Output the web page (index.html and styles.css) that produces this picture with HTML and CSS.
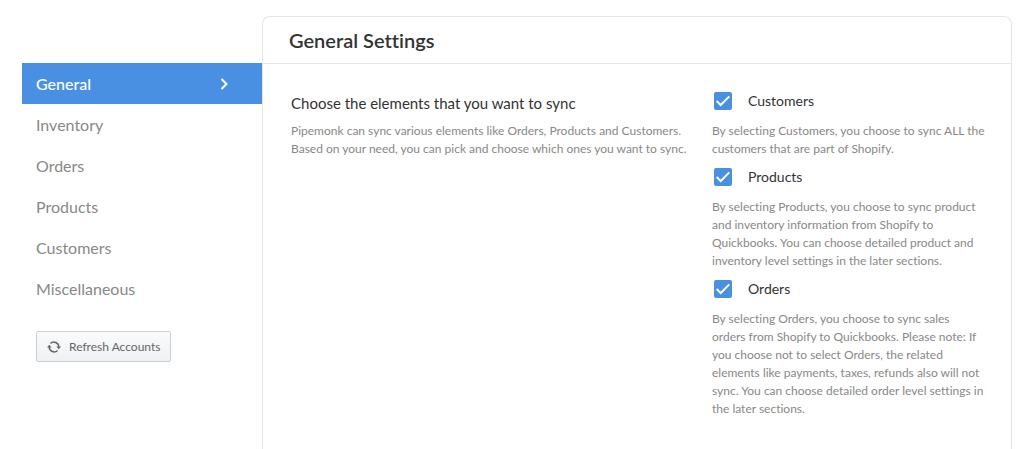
FILE: index.html
```html
<!DOCTYPE html>
<html lang="en">
<head>
  <meta charset="UTF-8">
  <meta name="viewport" content="width=device-width, initial-scale=1.0">
  <title>General Settings</title>
  <link rel="stylesheet" href="styles.css">
</head>
<body>
  <div class="page">
    <aside class="sidebar">
      <nav class="menu">
        <a class="menu-item active" href="#general">General
          <svg class="menu-arrow" width="8" height="12" viewBox="0 0 8 12" fill="none" stroke="currentColor" stroke-width="2"><path d="M1.5 1l5 5-5 5"/></svg>
        </a>
        <a class="menu-item" href="#inventory">Inventory</a>
        <a class="menu-item" href="#orders">Orders</a>
        <a class="menu-item" href="#products">Products</a>
        <a class="menu-item" href="#customers">Customers</a>
        <a class="menu-item" href="#miscellaneous">Miscellaneous</a>
      </nav>
      <button class="refresh" type="button">
        <svg width="14" height="12" viewBox="0 0 14 12">
          <path d="M3.4 2.6A4.9 4.9 0 0 1 11.8 6M10.6 9.4A4.9 4.9 0 0 1 2.2 6" fill="none" stroke="currentColor" stroke-width="1.4"/>
          <path d="M9.4 5.4H14l-2.3 2.8zM0 6.6h4.6L2.3 3.8z" fill="currentColor"/>
        </svg>
        Refresh Accounts
      </button>
    </aside>
    <main class="panel">
      <h1 class="panel-title">General Settings</h1>
      <div class="panel-body">
        <section class="intro">
          <h2 class="intro-title">Choose the elements that you want to sync</h2>
          <p class="help">Pipemonk can sync various elements like Orders, Products and Customers. Based on your need, you can pick and choose which ones you want to sync.</p>
        </section>
        <section class="options">
          <div class="option">
            <label class="option-label"><input class="check" type="checkbox" checked>Customers</label>
            <p class="help">By selecting Customers, you choose to sync ALL the customers that are part of Shopify.</p>
          </div>
          <div class="option">
            <label class="option-label"><input class="check" type="checkbox" checked>Products</label>
            <p class="help">By selecting Products, you choose to sync product and inventory information from Shopify to Quickbooks. You can choose detailed product and inventory level settings in the later sections.</p>
          </div>
          <div class="option">
            <label class="option-label"><input class="check" type="checkbox" checked>Orders</label>
            <p class="help">By selecting Orders, you choose to sync sales orders from Shopify to Quickbooks. Please note: If you choose not to select Orders, the related elements like payments, taxes, refunds also will not sync. You can choose detailed order level settings in the later sections.</p>
          </div>
        </section>
      </div>
    </main>
  </div>
</body>
</html>
```

FILE: styles.css
```css
*{
  box-sizing: border-box;
}
body{
  margin: 0;
  background: #fff;
  color: #333;
  font-family: Lato, sans-serif;
  font-variant-ligatures: none;
}
h1, h2, p{
  margin: 0;
}
.page{
  display: flex;
  min-height: 100vh;
  padding: 16px 4px 0 22px;
}

/* sidebar */
.sidebar{
  flex: 0 0 240px;
  padding-top: 47px;
}
.menu-item{
  display: flex;
  align-items: center;
  justify-content: space-between;
  height: 41px;
  padding: 0 34px 0 14px;
  color: #888;
  font-size: 16px;
  text-decoration: none;
}
.menu-item.active{
  background: #4990e2;
  color: #fff;
  font-weight: 500;
}
.refresh{
  display: flex;
  align-items: center;
  gap: 8px;
  height: 31px;
  margin: 22px 0 0 14px;
  padding: 0 10px;
  border: 1px solid #cbced4;
  border-radius: 2px;
  background: linear-gradient(#fafbfc, #f0f1f4);
  color: #666;
  font-family: inherit;
  font-size: 12px;
}

/* settings panel, open at the bottom */
.panel{
  flex: 1;
  border: 1px solid #e6e6e6;
  border-bottom: 0;
  border-radius: 8px 8px 0 0;
}
.panel-title{
  padding: 0 26px;
  border-bottom: 1px solid #e6e6e6;
  font-size: 20px;
  font-weight: 600;
  line-height: 46px;
}
.panel-body{
  display: grid;
  grid-template-columns: 1fr 274px;
  gap: 24px;
  padding: 28px 25px 28px 28px;
}
.intro-title{
  margin-bottom: 8px;
  font-size: 15px;
  font-weight: 400;
  line-height: 22px;
}
.help{
  color: #888;
  font-size: 12px;
  line-height: 18px;
}
.option{
  margin-bottom: 10px;
}
.option-label{
  display: flex;
  align-items: center;
  gap: 16px;
  margin-bottom: 12px;
  padding-left: 2px;
  font-size: 14px;
  line-height: 18px;
}
.check{
  width: 18px;
  height: 18px;
  margin: 0;
  border-radius: 2px;
  appearance: none;
  background: #ddd;
}
.check:checked{
  background: #4990e2 url("data:image/svg+xml,%3Csvg xmlns='http://www.w3.org/2000/svg' viewBox='0 0 18 18'%3E%3Cpath d='M2.7 9l4 4 8.6-8.6' fill='none' stroke='%23fff' stroke-width='2'/%3E%3C/svg%3E");
}
```
